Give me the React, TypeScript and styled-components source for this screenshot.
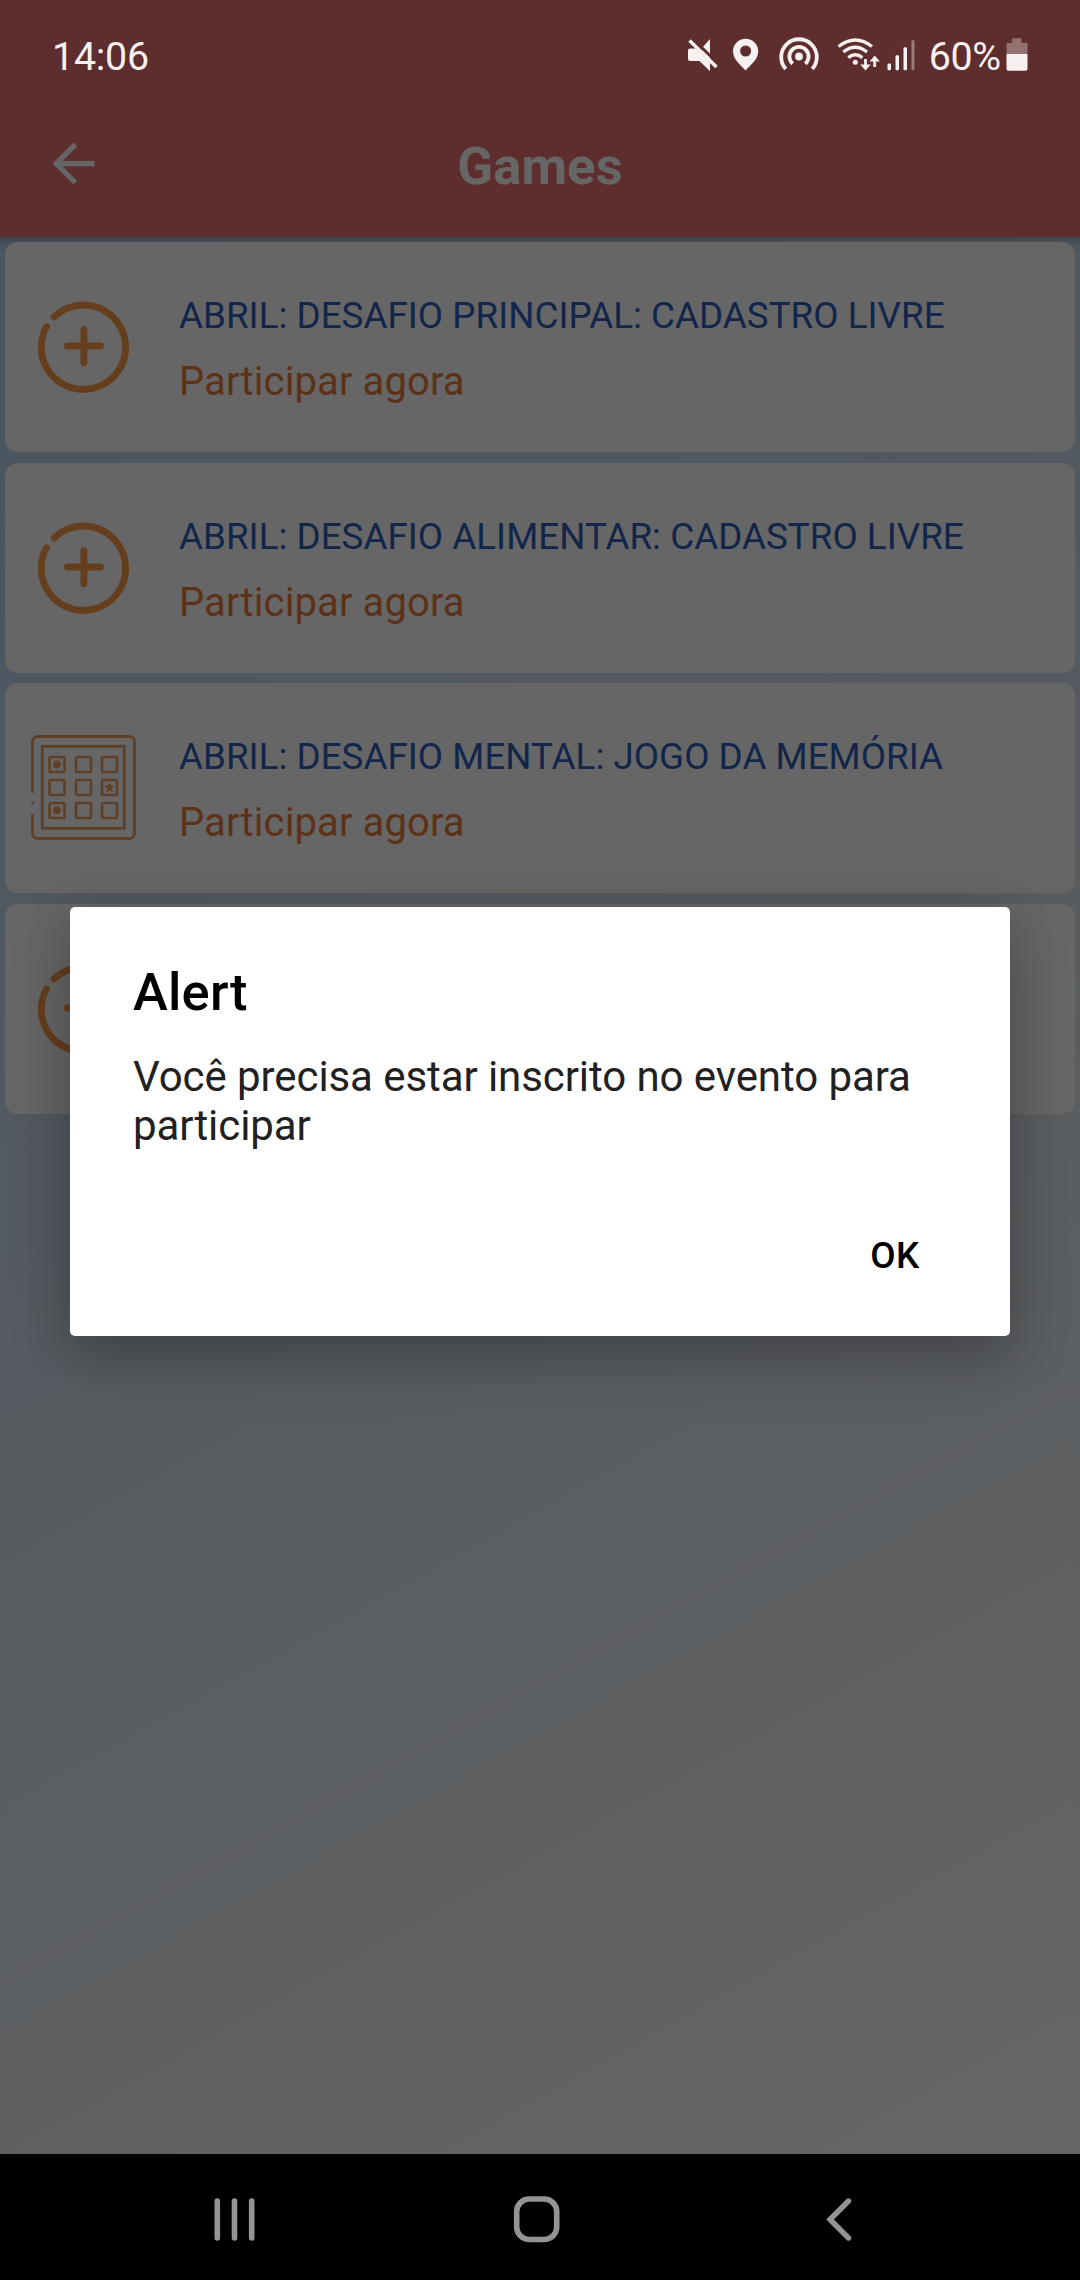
import React from "react";
import styled, { createGlobalStyle } from "styled-components";

const GlobalStyle = createGlobalStyle`
  *, *::before, *::after { box-sizing: border-box; }
  html, body { margin: 0; padding: 0; }
  body { font-family: Roboto, "Noto Sans", sans-serif; background: #000; }
  svg { display: block; flex: none; }
`;

const Screen = styled.div`
  position: relative;
  width: 1080px;
  height: 2280px;
  display: flex;
  flex-direction: column;
  overflow: hidden;
`;

const Scrim = styled.div`
  position: absolute;
  inset: 0;
  z-index: 1;
  background: rgba(0, 0, 0, 0.6);
  display: flex;
  justify-content: center;
  align-items: flex-start;
  padding-top: 907px;
`;

const TopBar = styled.header`
  flex: none;
  height: 237px;
  background: #ec7170;
  display: flex;
  flex-direction: column;
`;

const StatusBar = styled.div`
  position: relative;
  z-index: 2;
  height: 92px;
  padding: 20px 52px 0 52px;
  display: flex;
  justify-content: space-between;
  align-items: flex-start;
  color: #f6f0f0;
`;

const StatusText = styled.span<{ $spacing: number; $gap?: number }>`
  font-size: 39.4px;
  line-height: 74px;
  letter-spacing: ${(p) => p.$spacing}px;
  margin-right: ${(p) => p.$gap ?? 0}px;
`;

const StatusIcons = styled.div`
  display: flex;
  align-items: flex-start;
`;

const IconSlot = styled.span<{ $gap: number }>`
  margin-right: ${(p) => p.$gap}px;
  padding-top: 16px;
`;

const AppBar = styled.div`
  flex: 1;
  display: grid;
  grid-template-columns: 200px 1fr 200px;
  padding-top: 39px;
  align-items: start;
`;

const BackButton = styled.button`
  border: 0;
  background: none;
  padding: 1px 0 0 42px;
  color: #fff;
`;

const AppTitle = styled.h1`
  margin: 0;
  text-align: center;
  color: #fff;
  font-size: 52.5px;
  font-weight: 700;
  line-height: 70px;
  letter-spacing: 0.2px;
`;

const Content = styled.main`
  flex: 1;
  padding: 5px;
  display: flex;
  flex-direction: column;
  gap: 10.67px;
  background: linear-gradient(151deg, #b6d5f0 0%, #cfdff3 35%, #e2ebf3 60%, #eff3f7 80%, #fffffd 100%);
  box-shadow: inset 0 12px 8px -8px rgba(0, 0, 0, 0.24);
`;

const Card = styled.article`
  flex: none;
  height: 210px;
  border-radius: 13px;
  background: #fff;
  display: flex;
  align-items: flex-start;
`;

const CardIcon = styled.div`
  width: 174px;
  height: 210px;
  padding: 52px 0 0 26px;
`;

const CardBody = styled.div`
  padding-top: 52px;
  display: flex;
  flex-direction: column;
  gap: 21px;
  white-space: nowrap;
`;

const CardTitle = styled.div`
  color: #2d5cb8;
  font-size: 36.75px;
  line-height: 44px;
  letter-spacing: 0.03px;
`;

const CardAction = styled.div`
  color: #e67c3a;
  font-size: 40px;
  line-height: 46px;
  letter-spacing: 0.1px;
`;

const Dialog = styled.section`
  width: 940px;
  height: 429px;
  padding: 54px 63px 0;
  border-radius: 5px;
  background: #fff;
  display: flex;
  flex-direction: column;
  box-shadow: 0 24px 60px rgba(0, 0, 0, 0.22), 0 4px 50px rgba(0, 0, 0, 0.1);
`;

const DialogTitle = styled.h2`
  margin: 0 0 29px;
  font-size: 52.5px;
  font-weight: 500;
  line-height: 62px;
  letter-spacing: 0.2px;
  color: #000;
`;

const DialogText = styled.p`
  margin: 0;
  font-size: 42px;
  line-height: 49px;
  letter-spacing: -0.08px;
  color: #212121;
`;

const DialogActions = styled.div`
  display: flex;
  justify-content: flex-end;
  padding: 84px 27.5px 0 0;
`;

const DialogButton = styled.button`
  border: 0;
  padding: 0;
  background: none;
  font-family: inherit;
  font-size: 36.75px;
  font-weight: 500;
  line-height: 44px;
  letter-spacing: 0.3px;
  color: #000;
`;

const NavBar = styled.nav`
  position: relative;
  z-index: 2;
  flex: none;
  height: 126px;
  background: #000;
  display: flex;
  padding: 40px 0 0 210px;
`;

const NavItem = styled.span<{ $width: number }>`
  width: ${(p) => p.$width}px;
`;

const MuteIcon = () => (
  <svg width="32" height="36" viewBox="687 36 32 36" fill="currentColor">
    <path d="M701.500 48.500 710 39v25z" />
    <path d="M688 50.500q0-2 2-2h5.500L710 62v9.300L699.500 61H690q-2 0-2-2z" />
    <path d="M691.500 37.500 719.500 65" stroke="#5e2d2c" strokeWidth="3" />
    <path d="M689.500 40.500 716.500 67" stroke="currentColor" strokeWidth="3.400" />
  </svg>
);

const PinIcon = () => (
  <svg width="26" height="36" viewBox="733 36 26 36" fill="currentColor" fillRule="evenodd">
    <path d="M745.600 38.700c-7 0-12.600 5.500-12.600 12.500 0 8.600 7.500 13.200 12.600 19.300 5.100-6.100 12.600-10.700 12.600-19.300 0-7-5.600-12.500-12.600-12.500zm0 6.800a5.500 5.500 0 1 1 0 11 5.500 5.500 0 0 1 0-11z" />
  </svg>
);

const HotspotIcon = () => (
  <svg width="40" height="36" viewBox="779.500 36 40 36" fill="none" stroke="currentColor" strokeWidth="3.800">
    <circle cx="799.500" cy="56.500" r="3.900" fill="currentColor" stroke="none" />
    <path d="M793.200 63.800a9.600 9.600 0 1 1 12.600 0" />
    <path d="M786.300 69a17.800 17.800 0 1 1 26.400 0" />
  </svg>
);

const WifiIcon = () => (
  <svg width="43" height="36" viewBox="837 36 43 36" fill="none" stroke="currentColor" strokeWidth="3.300">
    <path d="M838.500 46.500q17-13 33.500 0" />
    <path d="M843.300 52q12-9.500 23.700 0" />
    <path d="M848.300 57.600q7-5.600 14 0" />
    <circle cx="855.300" cy="62.300" r="2.500" fill="currentColor" stroke="none" />
    <path d="M865.500 59v9M874.700 58v9" strokeWidth="2.800" />
    <path d="M860.200 64.500h10.600l-5.300 6zM869.500 61.500h10.400l-5.200-6z" fill="currentColor" stroke="none" />
  </svg>
);

const SignalIcon = () => (
  <svg width="28" height="36" viewBox="887.500 36 28 36" fill="currentColor">
    <rect x="888" y="63.500" width="3.500" height="6.800" rx="1" />
    <rect x="896" y="55.300" width="3.500" height="15" rx="1" />
    <rect x="904" y="47.300" width="3.500" height="23" rx="1" />
    <rect x="912" y="40.300" width="3" height="30" rx="1" opacity="0.400" />
  </svg>
);

const BatteryIcon = () => (
  <svg width="22" height="36" viewBox="1006.500 36 22 36" fill="currentColor">
    <path d="M1012.700 38.200h9.300v4.800h6v11h-21V43h5.700z" opacity="0.350" />
    <path d="M1007 54h21v14.700q0 2-2 2h-17q-2 0-2-2z" />
  </svg>
);

const BackArrow = () => (
  <svg width="63" height="63" viewBox="0 0 24 24" fill="currentColor">
    <path d="M20 11H7.830l5.590-5.590L12 4l-8 8 8 8 1.410-1.410L7.830 13H20v-2z" />
  </svg>
);

const PlusIcon = () => (
  <svg width="105" height="105" viewBox="30.500 294.500 105 105" fill="none" stroke="#fc9c4c" strokeWidth="6.900" strokeLinecap="round">
    <path d="M53.700 317.300A42.200 42.200 0 1 1 46 327.300" />
    <path d="M83.400 330.300v33M66.900 346.500h33" />
  </svg>
);

const cellStart = [49.500, 76, 102];
const rowStart = [757, 780, 803];

const BoardIcon = () => (
  <svg width="105" height="105" viewBox="31 735 105 105" fill="none" stroke="#ee9f5c">
    <path
      d="M32.500 793V742a5.500 5.500 0 0 1 5.500-5.500h91a5.500 5.500 0 0 1 5.500 5.500v91a5.500 5.500 0 0 1-5.500 5.500H38a5.500 5.500 0 0 1-5.500-5.500V814"
      strokeWidth="2.900"
    />
    <circle cx="32.500" cy="803" r="1.500" fill="#ee9f5c" stroke="none" />
    <rect x="42.300" y="746.300" width="82" height="82" strokeWidth="2.700" />
    {rowStart.map((y) =>
      cellStart.map((x) => <rect key={`${x}-${y}`} x={x} y={y} width="15" height="15" rx="1.200" strokeWidth="2.600" />)
    )}
    <circle cx="57" cy="764.500" r="4" fill="#ee9f5c" stroke="none" />
    <circle cx="57" cy="810.300" r="4" fill="#ee9f5c" stroke="none" />
    <path
      d="M109.500 782.700l1.300 3.100 3.500.3-2.700 2.200.8 3.400-2.900-1.800-2.900 1.800.8-3.400-2.700-2.200 3.500-.3z"
      fill="#ee9f5c"
      stroke="#ee9f5c"
      strokeWidth="0.600"
    />
  </svg>
);

const RecentsIcon = () => (
  <svg width="48" height="50" viewBox="210 2194 48 50" stroke="#949494" strokeWidth="5.600" strokeLinecap="round">
    <path d="M217.300 2201v37M234.500 2201v37M251.700 2201v37" />
  </svg>
);

const HomeIcon = () => (
  <svg width="50" height="50" viewBox="512 2194 50 50" fill="none" stroke="#949494" strokeWidth="5.600">
    <rect x="516.700" y="2199" width="40" height="40.500" rx="12.500" />
  </svg>
);

const NavBackIcon = () => (
  <svg width="32" height="50" viewBox="823 2194 32 50" fill="none" stroke="#949494" strokeWidth="5.400" strokeLinecap="round">
    <path d="M848.500 2201 830 2219.500 848.500 2238" />
  </svg>
);

interface Game {
  title: string;
  icon: "plus" | "board";
}

const games: Game[] = [
  { title: "ABRIL: DESAFIO PRINCIPAL: CADASTRO LIVRE", icon: "plus" },
  { title: "ABRIL: DESAFIO ALIMENTAR: CADASTRO LIVRE", icon: "plus" },
  { title: "ABRIL: DESAFIO MENTAL: JOGO DA MEMÓRIA", icon: "board" },
  { title: "", icon: "plus" },
];

export default function App() {
  return (
    <>
      <GlobalStyle />
      <Screen>
        <TopBar>
          <StatusBar>
            <StatusText $spacing={-0.25}>14:06</StatusText>
            <StatusIcons>
              <IconSlot $gap={14}><MuteIcon /></IconSlot>
              <IconSlot $gap={20.500}><PinIcon /></IconSlot>
              <IconSlot $gap={17.500}><HotspotIcon /></IconSlot>
              <IconSlot $gap={7.500}><WifiIcon /></IconSlot>
              <IconSlot $gap={13.500}><SignalIcon /></IconSlot>
              <StatusText $spacing={-0.5} $gap={5.5}>60%</StatusText>
              <IconSlot $gap={0}><BatteryIcon /></IconSlot>
            </StatusIcons>
          </StatusBar>
          <AppBar>
            <BackButton aria-label="Voltar"><BackArrow /></BackButton>
            <AppTitle>Games</AppTitle>
          </AppBar>
        </TopBar>
        <Content>
          {games.map((game, i) => (
            <Card key={i}>
              <CardIcon>{game.icon === "plus" ? <PlusIcon /> : <BoardIcon />}</CardIcon>
              {game.title && (
                <CardBody>
                  <CardTitle>{game.title}</CardTitle>
                  <CardAction>Participar agora</CardAction>
                </CardBody>
              )}
            </Card>
          ))}
        </Content>
        <NavBar>
          <NavItem $width={302}><RecentsIcon /></NavItem>
          <NavItem $width={311}><HomeIcon /></NavItem>
          <NavItem $width={32}><NavBackIcon /></NavItem>
        </NavBar>
        <Scrim>
          <Dialog role="alertdialog">
            <DialogTitle>Alert</DialogTitle>
            <DialogText>Você precisa estar inscrito no evento para participar</DialogText>
            <DialogActions>
              <DialogButton>OK</DialogButton>
            </DialogActions>
          </Dialog>
        </Scrim>
      </Screen>
    </>
  );
}
